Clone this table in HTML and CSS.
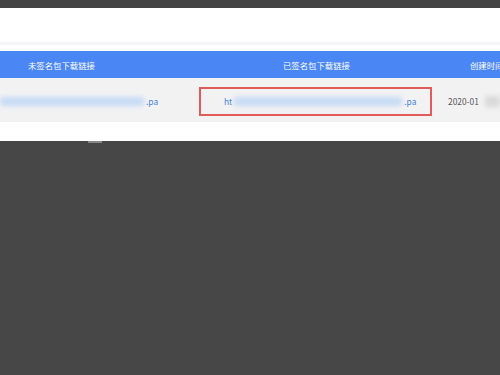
FILE: index.html
```html
<!DOCTYPE html>
<html lang="zh-CN">
<head>
<meta charset="utf-8">
<link rel="stylesheet" href="styles.css">
</head>
<body>
<div class="topbar"></div>
<div class="panel">
  <div class="spacer"></div>
  <div class="divider"></div>
  <div class="table">
    <div class="thead">
      <div class="th c1">未签名包下载链接</div>
      <div class="th c2">已签名包下载链接</div>
      <div class="th c3">创建时间</div>
    </div>
    <div class="trow">
      <div class="td c1"><span class="blur long"></span><span class="ext">.pa</span></div>
      <div class="td c2"><div class="redbox"><span class="ht">ht</span><span class="blur mid"></span><span class="ext">.pa</span></div></div>
      <div class="td c3"><span class="date">2020-01</span><span class="gblur"></span></div>
    </div>
  </div>
  <div class="bottom"></div>
</div>
<div class="dark"><span class="mark"></span></div>
</body>
</html>
```
FILE: styles.css
```css
* { box-sizing: border-box; }
html, body { margin: 0; padding: 0; }
body {
  width: 500px;
  height: 375px;
  background: #474747;
  font-family: "Noto Sans CJK SC", "Noto Sans", sans-serif;
  overflow: hidden;
}
.topbar { height: 8px; background: #444; }
.panel { background: #fff; display: flex; flex-direction: column; }
.spacer { height: 34px; }
.divider { height: 3px; background: #f5f5f7; }
.table { margin-top: 6px; }
.thead {
  height: 27px;
  background: #4a86f4;
  display: flex;
  align-items: center;
  color: #fff;
  font-size: 8.4px;
}
.c1 { width: 199px; flex: none; }
.c2 { width: 233px; flex: none; }
.c3 { flex: 1; min-width: 0; }
.th.c1 { padding-left: 28px; }
.th.c2 { padding-left: 84px; }
.th.c3 { padding-left: 38px; white-space: nowrap; overflow: hidden; }
.trow {
  height: 44px;
  background: #f2f2f3;
  display: flex;
  align-items: center;
  font-size: 8.4px;
  color: #3f83d6;
}
.td { display: flex; align-items: center; height: 100%; padding-top: 2px; }
.blur {
  display: inline-block;
  height: 9px;
  background: #c6dbf5;
  filter: blur(2.5px);
  border-radius: 3px;
}
.long { width: 144px; }
.mid { width: 168px; margin-left: 2px; }
.ext { margin-left: 2px; }
.redbox {
  height: 29px;
  width: 233px;
  border: 2px solid #e35a5a;
  display: flex;
  align-items: center;
  padding-left: 23px;
}
.ht { color: #3f83d6; }
.td.c3 { padding-left: 16px; color: #555; white-space: nowrap; overflow: hidden; }
.gblur {
  display: inline-block;
  width: 30px;
  height: 11px;
  margin-left: 6px;
  background: #d9d9d9;
  filter: blur(2.5px);
}
.bottom { height: 19px; background: #fff; }
.dark { height: 233px; background: #474747; position: relative; }
.mark {
  position: absolute;
  left: 88px;
  top: 0;
  width: 14px;
  height: 2px;
  background: #888;
}
```
